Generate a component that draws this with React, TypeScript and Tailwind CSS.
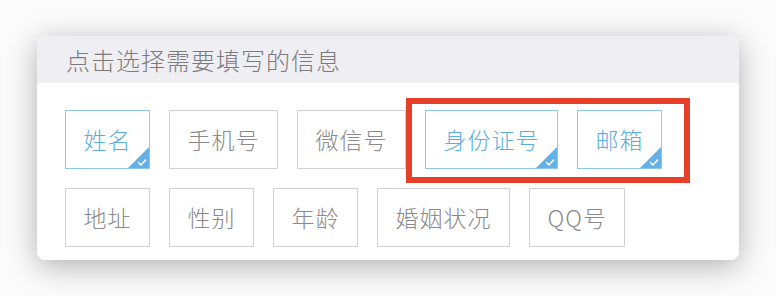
import React from "react";

const rows: { label: string; selected: boolean }[][] = [
  [
    { label: "姓名", selected: true },
    { label: "手机号", selected: false },
    { label: "微信号", selected: false },
    { label: "身份证号", selected: true },
    { label: "邮箱", selected: true },
  ],
  [
    { label: "地址", selected: false },
    { label: "性别", selected: false },
    { label: "年龄", selected: false },
    { label: "婚姻状况", selected: false },
    { label: "QQ号", selected: false },
  ],
];

function Chip({ label, selected }: { label: string; selected: boolean }) {
  return (
    <div
      className={
        selected
          ? "relative h-[59px] px-[17.5px] flex items-center border border-[#8cc8ea] text-[#5aaede] text-[23px] leading-none font-light"
          : "relative h-[59px] px-[17.5px] flex items-center border border-[#d2d2d2] text-[#8a8a8a] text-[23px] leading-none font-light"
      }
    >
      <span className="tracking-[1px]">{label}</span>
      {selected && (
        <svg className="absolute right-0 bottom-0" width="21" height="21" viewBox="0 0 21 21">
          <path d="M21 0 L21 21 L0 21 Z" fill="#63b1e8" />
          <path d="M10.5 15.5 L13 18 L17.5 13" stroke="#fff" strokeWidth="1.6" fill="none" strokeLinecap="round" strokeLinejoin="round" />
        </svg>
      )}
    </div>
  );
}

export default function App() {
  return (
    <div
      className="w-[776px] h-[296px] bg-[#fbfbfb] pl-[37px] pt-[36px] overflow-hidden"
      style={{ fontFamily: '"Noto Sans CJK SC", "Noto Sans", sans-serif' }}
    >
      <div className="relative w-[702px] h-[224px] bg-white rounded-[8px] shadow-[0_6px_30px_rgba(0,0,0,0.3)] overflow-visible">
        <div className="h-[47px] bg-[#eeeef3] rounded-t-[8px] pl-[29px] flex items-center">
          <span className="text-[24px] text-[#7b7b7b] tracking-[1px] leading-none font-light">点击选择需要填写的信息</span>
        </div>
        <div className="pl-[28px] pt-[27px] flex flex-col gap-[19px]">
          {rows.map((row, i) => (
            <div key={i} className="flex gap-[19px]">
              {row.map((c) => (
                <Chip key={c.label} label={c.label} selected={c.selected} />
              ))}
            </div>
          ))}
        </div>
        <div className="absolute left-[369px] top-[62px] w-[284px] h-[85px] border-[6px] border-[#e6402b] pointer-events-none" />
      </div>
    </div>
  );
}
